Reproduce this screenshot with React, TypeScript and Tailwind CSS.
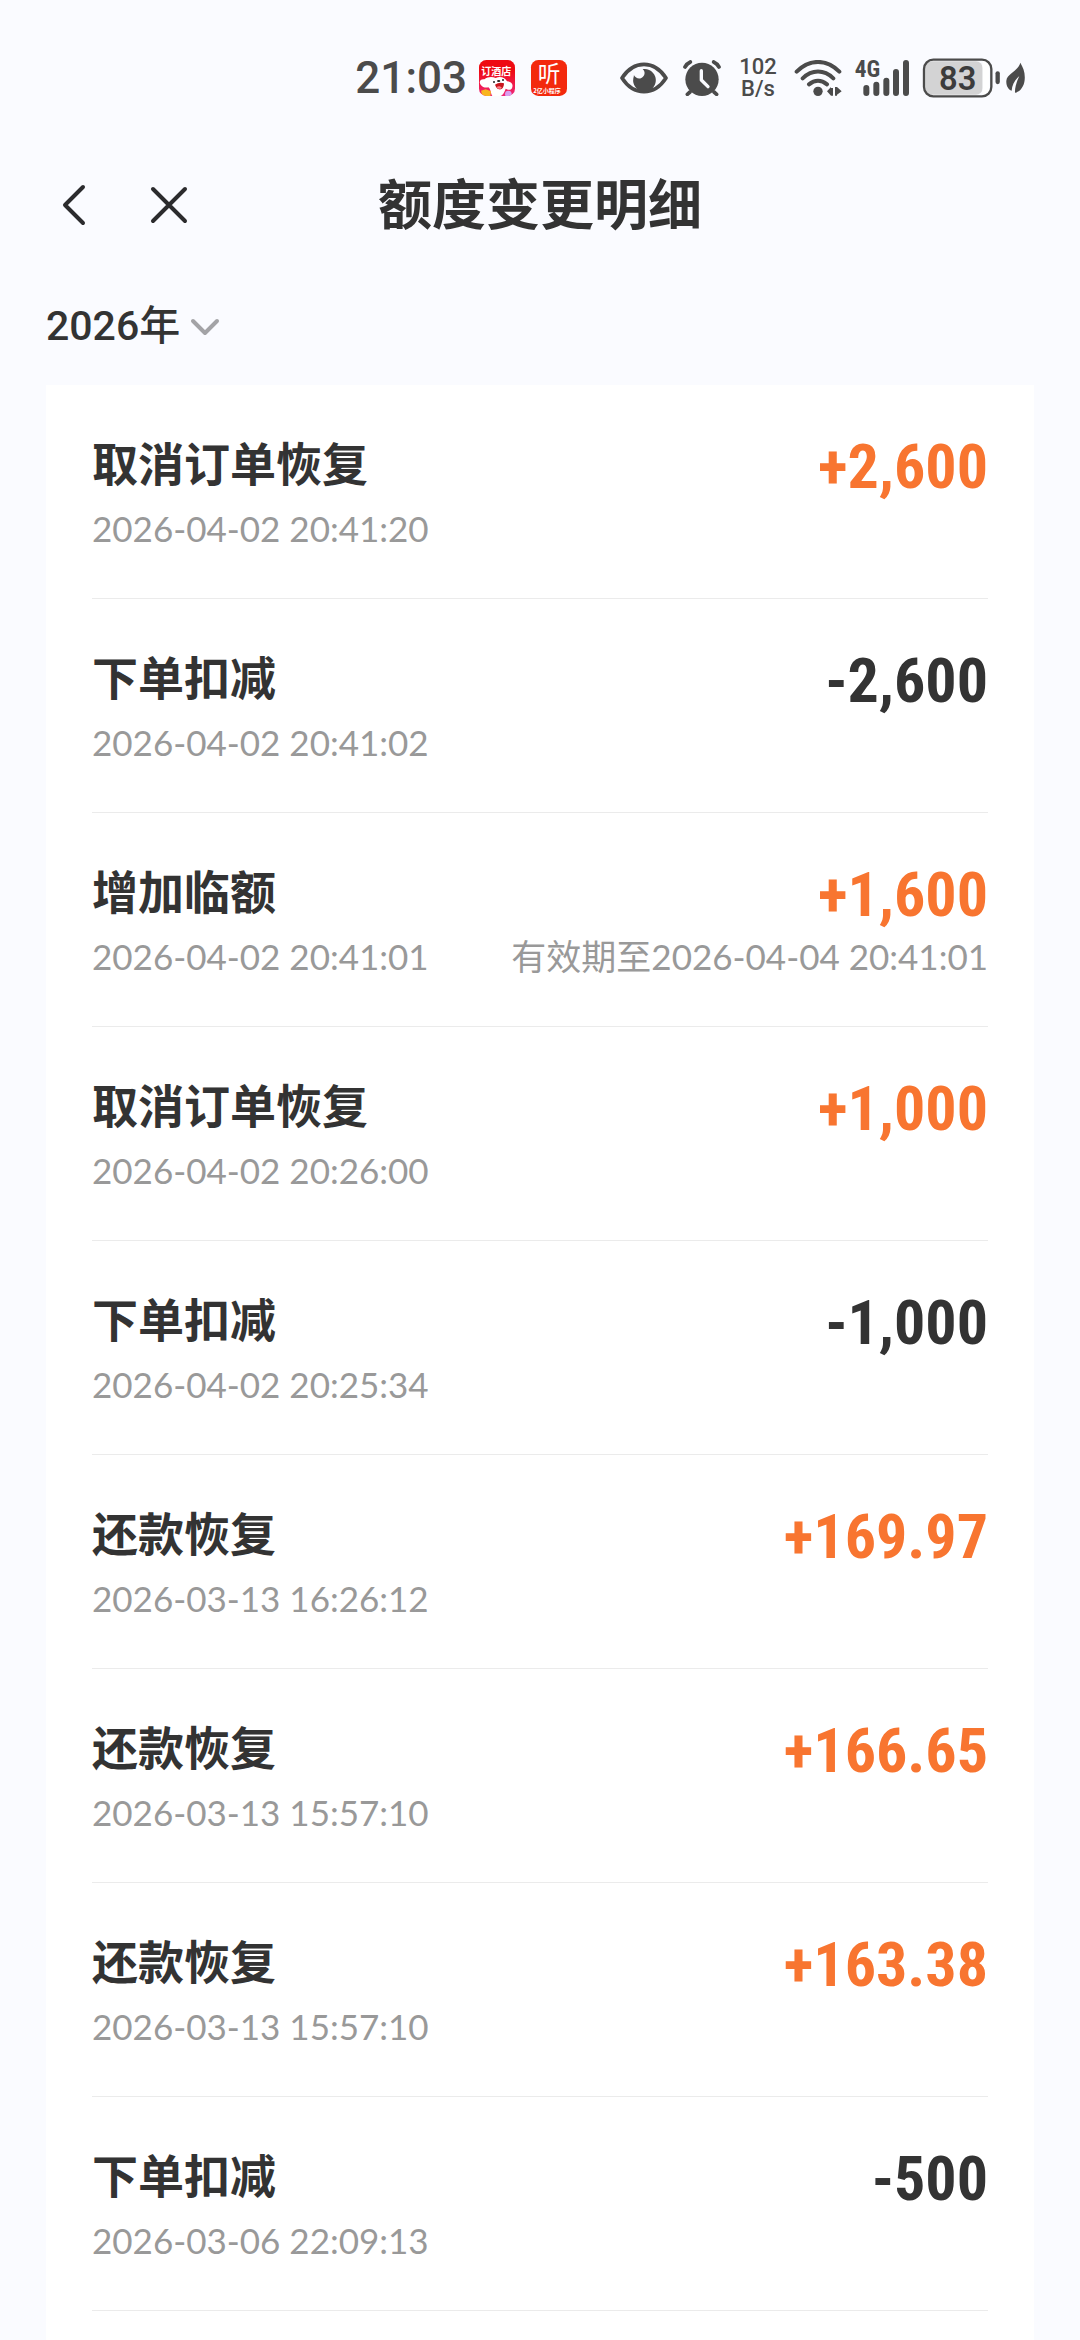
import { useState } from "react";
import clsx from "clsx";

const records = [
  { title: "取消订单恢复", time: "2026-04-02 20:41:20", amount: "+2,600" },
  { title: "下单扣减", time: "2026-04-02 20:41:02", amount: "-2,600" },
  { title: "增加临额", time: "2026-04-02 20:41:01", amount: "+1,600", expire: "有效期至2026-04-04 20:41:01" },
  { title: "取消订单恢复", time: "2026-04-02 20:26:00", amount: "+1,000" },
  { title: "下单扣减", time: "2026-04-02 20:25:34", amount: "-1,000" },
  { title: "还款恢复", time: "2026-03-13 16:26:12", amount: "+169.97" },
  { title: "还款恢复", time: "2026-03-13 15:57:10", amount: "+166.65" },
  { title: "还款恢复", time: "2026-03-13 15:57:10", amount: "+163.38" },
  { title: "下单扣减", time: "2026-03-06 22:09:13", amount: "-500" },
];

const HotelAppIcon = () => (
  <svg className="w-9 h-9" viewBox="0 0 108 108" aria-hidden="true">
    <defs>
      <clipPath id="hotel"><rect width="108" height="108" rx="22" /></clipPath>
      <linearGradient id="hotelBg" x1="0" y1="0" x2="0" y2="1">
        <stop offset="0.3" stopColor="#ee0a12" />
        <stop offset="1" stopColor="#f0287a" />
      </linearGradient>
    </defs>
    <g clipPath="url(#hotel)">
      <rect width="108" height="108" fill="url(#hotelBg)" />
      <path d="M5 74C-2 64 6 56 16 58C26 50 40 50 50 54C64 46 80 54 84 64C100 64 104 76 98 86C90 94 82 86 80 86C76 98 70 108 62 108H40C34 98 36 88 28 82C20 84 10 82 5 74Z" fill="#fff" />
      <path d="M48 74C56 68 66 66 75 70C75 83 68 90 60 88C53 86 50 79 48 74Z" fill="#c8161d" />
      <path d="M53 81C58 77 66 79 68 83C66 88 56 88 53 81Z" fill="#ff7f8a" />
      <ellipse cx="59" cy="63" rx="5" ry="3" fill="#222" />
      <circle cx="45" cy="66" r="3" fill="#222" />
      <circle cx="72" cy="60" r="3" fill="#222" />
      <path d="M6 92L20 88L36 94L34 108H10Z" fill="#f8b51e" />
      <circle cx="88" cy="102" r="10" fill="#d8a0f0" />
      <text x="7" y="46" fontSize="30" fontWeight="700" fill="#fff" fontFamily="Noto Sans CJK SC, sans-serif">订酒店</text>
    </g>
  </svg>
);

const ListenAppIcon = () => (
  <svg className="w-9 h-9 overflow-visible" viewBox="0 0 108 108" aria-hidden="true">
    <rect width="108" height="108" rx="22" fill="#f3290d" />
    <text x="20" y="66" fontSize="68" fontWeight="400" fill="#fff" fontFamily="Noto Sans CJK SC, sans-serif">听</text>
    <text x="7" y="99" fontSize="18" fontWeight="700" fill="#fff" fontFamily="Noto Sans CJK SC, sans-serif">2亿小程序</text>
  </svg>
);

const EyeIcon = () => (
  <svg className="w-12 h-9" viewBox="0 0 144 108" aria-hidden="true">
    <path d="M6 54C24 26 46 13 72 13S120 26 138 54C120 82 98 95 72 95S24 82 6 54Z" fill="none" stroke="#4b4b4b" strokeWidth="11" strokeLinejoin="round" />
    <path d="M74 27A34 34 0 1 1 40 55C43 46 41 44 42 46C46 54 56 58 64 54C74 49 78 36 68 27Z" fill="#4b4b4b" />
  </svg>
);

const AlarmIcon = () => (
  <svg className="w-10 h-9" viewBox="0 0 120 108" aria-hidden="true">
    <g fill="none" stroke="#4b4b4b" strokeWidth="11" strokeLinecap="round">
      <path d="M9 21C13 14 18 9 25 6M111 21C107 14 102 9 95 6M24 96L16 103M96 96L104 103" />
    </g>
    <circle cx="60" cy="58" r="50" fill="#4b4b4b" />
    <path d="M58 32V60L78 80" fill="none" stroke="#fafbff" strokeWidth="10" strokeLinecap="round" strokeLinejoin="round" />
  </svg>
);

const WifiIcon = () => (
  <svg className="w-12 h-9" viewBox="0 0 144 108" aria-hidden="true">
    <g fill="none" stroke="#4b4b4b" strokeWidth="12" strokeLinecap="round">
      <path d="M8 35C46 -4 98 -4 136 35M26 55C54 28 90 28 118 55M45 73C62 59 82 59 99 73" />
    </g>
    <circle cx="72" cy="94" r="14" fill="#4b4b4b" />
    <path d="M99 94L111 81V107ZM111 84H117V107H111ZM123 81H129V107H123ZM129 81L143 94L129 104Z" fill="#4b4b4b" />
  </svg>
);

const SignalIcon = () => (
  <svg className="w-14 h-9 overflow-visible" viewBox="0 0 168 108" aria-hidden="true">
    <text x="2" y="52" fontSize="70" fontWeight="700" fill="#4b4b4b" fontFamily="Roboto Condensed, Roboto, sans-serif">4G</text>
    <g stroke="#4b4b4b" strokeWidth="18" strokeLinecap="round">
      <path d="M37 84V99M67 74V99M97 62V99M126 36V99M156 9V99" />
    </g>
  </svg>
);

const BatteryIcon = () => (
  <svg className="w-20 h-10" viewBox="0 0 240 120" aria-hidden="true">
    <rect x="10" y="10" width="172" height="100" fill="#d3d3d4" rx="20" />
    <path d="M182 10H192A14 14 0 0 1 202 24V96A14 14 0 0 1 192 110H182Z" fill="#fff" />
    <rect x="6" y="5" width="202" height="110" rx="28" fill="none" stroke="#4b4b4b" strokeWidth="7" />
    <path d="M227 46V72" stroke="#4b4b4b" strokeWidth="13" strokeLinecap="round" />
    <text x="107" y="95" textAnchor="middle" fontSize="98" fontWeight="600" fill="#3c3c3c" fontFamily="Roboto, sans-serif">83</text>
  </svg>
);

const LeafIcon = () => (
  <svg className="w-5 h-8" viewBox="0 0 60 96" aria-hidden="true">
    <path d="M43 2C52 18 58 32 56 54C54 74 42 90 27 92C26 78 32 58 40 42C26 54 18 70 17 86C6 82 0 70 1 56C4 34 36 28 43 2Z" fill="#4b4b4b" />
  </svg>
);

const StatusBar = () => (
  <div className="flex items-center justify-end h-[156px] pr-[54px] text-[#4b4b4b]">
    <span className="text-[44px] leading-none font-medium">21:03</span>
    <div className="flex gap-4 ml-3">
      <HotelAppIcon />
      <ListenAppIcon />
    </div>
    <div className="flex items-center ml-[53px]">
      <EyeIcon />
      <div className="ml-[14px]"><AlarmIcon /></div>
      <p className="w-12 ml-3 text-[22px] leading-[22px] font-medium text-center">102<br />B/s</p>
      <div className="ml-3"><WifiIcon /></div>
      <div className="ml-3"><SignalIcon /></div>
      <div className="ml-3"><BatteryIcon /></div>
      <div className="ml-1"><LeafIcon /></div>
    </div>
  </div>
);

const Header = () => (
  <header className="relative flex items-center justify-center h-[102px]">
    {/* Nav buttons float over the centered title */}
    <div className="absolute left-12 flex gap-12">
      <button type="button" aria-label="返回" className="w-12 h-12 cursor-pointer">
        <svg className="w-12 h-12" viewBox="0 0 48 48" fill="none" stroke="#2b2b2d" strokeWidth="4" strokeLinecap="round" strokeLinejoin="round">
          <path d="M35 4L17 22L35 40" />
        </svg>
      </button>
      <button type="button" aria-label="关闭" className="w-12 h-12 cursor-pointer">
        <svg className="w-12 h-12" viewBox="0 0 48 48" fill="none" stroke="#2b2b2d" strokeWidth="4" strokeLinecap="round">
          <path d="M9 6L41 38M41 6L9 38" />
        </svg>
      </button>
    </div>
    <h1 className="text-[54px] leading-none font-bold">额度变更明细</h1>
  </header>
);

export default function App() {
  const [year, setYear] = useState("2026");

  return (
    <div className="h-screen overflow-hidden bg-[#fafbff] text-[#333333] font-['Roboto','Noto_Sans_CJK_SC',sans-serif]">
      <StatusBar />
      <Header />

      {/* Year filter */}
      <label className="flex items-center gap-2 w-fit h-[127px] pl-[46px] pt-2">
        <select
          aria-label="年份"
          className="appearance-none bg-transparent text-[41px] leading-[60px] font-medium cursor-pointer"
          value={year}
          onChange={(e) => setYear(e.target.value)}
        >
          <option value="2026">2026年</option>
        </select>
        <svg className="w-8 h-8" viewBox="0 0 32 32" fill="none" stroke="#a3a3a6" strokeWidth="4" strokeLinecap="round" strokeLinejoin="round">
          <path d="M4 11L16 23L28 11" />
        </svg>
      </label>

      {/* Records */}
      <ul className="mx-[46px] px-[46px] bg-white">
        {records.map((record, index) => (
          <li key={`record_${index}`} className="pt-12 pb-[45px] border-b border-[#ebebeb]">
            <div className="flex items-center justify-between h-16">
              <h2 className="text-[46px] font-bold">{record.title}</h2>
              <span
                className={clsx(
                  "pt-1 text-[62px] leading-none font-bold font-['Roboto_Condensed','Roboto',sans-serif]",
                  record.amount.startsWith("+") && "text-[#f87530]"
                )}
              >
                {record.amount}
              </span>
            </div>
            <div className="flex items-center justify-between h-[50px] mt-[6px] text-[35px] text-[#999999] font-['Lato','Noto_Sans_CJK_SC',sans-serif]">
              <time>{record.time}</time>
              {record.expire && <span>{record.expire}</span>}
            </div>
          </li>
        ))}
        <li className="h-12" aria-hidden="true" />
      </ul>
    </div>
  );
}
